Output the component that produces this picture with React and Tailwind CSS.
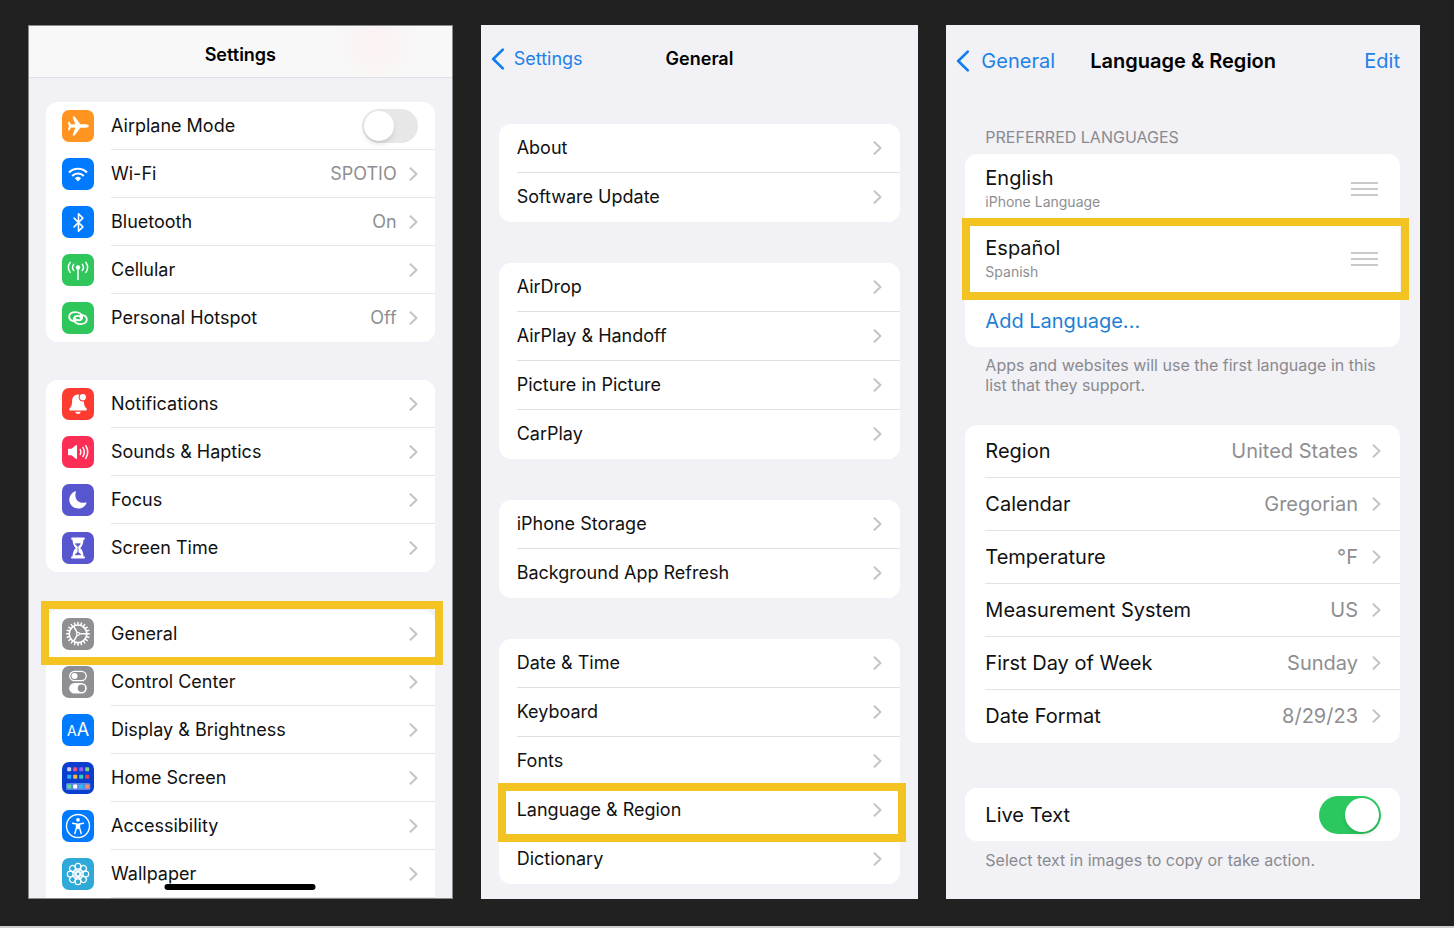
import React, { useState } from 'react';
import { Bluetooth } from 'lucide-react';
import { clsx } from 'clsx';

const Glyph = ({ children, ...rest }) => (
    <svg viewBox="0 0 32 32" className="size-8" fill="none" stroke="#fff" strokeLinecap="round" strokeLinejoin="round" aria-hidden="true" {...rest}>
        {children}
    </svg>
);

const PlaneGlyph = () => (
    <Glyph stroke="none" fill="#fff">
        <path d="M26.8 16c0-1-1.400-1.700-3.200-1.700h-5.200L13 6.900c-.3-.4-.6-.5-1-.5h-.8c-.4 0-.6.3-.5.7l2.500 7.200-4 .3-1.700-2.500c-.2-.3-.4-.4-.7-.4h-.4c-.3 0-.5.2-.4.6L6.900 16 6 19.700c-.1.400.1.600.4.600h.4c.3 0 .5-.1.7-.4l1.700-2.500 4 .3-2.500 7.200c-.1.400.1.700.5.700h.8c.4 0 .7-.1 1-.5l5.400-7.400h5.200c1.800 0 3.200-.7 3.200-1.700z" />
    </Glyph>
);

const WifiGlyph = () => (
    <Glyph strokeWidth="2.1" strokeLinecap="butt">
        <path d="M7 14.400a12.800 12.800 0 0 1 18 0" />
        <path d="M10.200 17.900a8.300 8.300 0 0 1 11.600 0" />
        <path d="M12.900 20.300a4.500 4.500 0 0 1 6.200 0L16 23.400z" fill="#fff" stroke="none" />
    </Glyph>
);

const CellularGlyph = () => (
    <Glyph strokeWidth="1.500">
        <circle cx="16" cy="13.400" r="2.200" fill="#fff" stroke="none" />
        <path d="M16 14v11.500" />
        <path d="M11.700 16.400a4.800 4.800 0 0 1 0-6M20.300 16.400a4.800 4.800 0 0 0 0-6" />
        <path d="M8.200 18.400a8.200 8.200 0 0 1 0-10M23.800 18.400a8.200 8.200 0 0 0 0-10" />
    </Glyph>
);

const HotspotGlyph = () => (
    <Glyph strokeWidth="1.900">
        <path d="M13.200 19.300c-3.600-.2-6-2-6-4.600 0-2.800 2.600-4.600 6.200-4.600s6.800 2 6.800 4.900c0 2-1.700 3.300-4 3.300-1.700 0-2.900-.8-3.200-2" />
        <path d="M18.800 12.900c3.600.2 6 2 6 4.600 0 2.800-2.600 4.600-6.200 4.600s-6.800-2-6.800-4.900c0-2 1.700-3.300 4-3.300 1.700 0 2.900.8 3.200 2" />
    </Glyph>
);

const BellGlyph = () => (
    <Glyph stroke="none" fill="#fff">
        <path d="M16 6.500c-4 0-5.900 3-5.900 6.600 0 4.300-1 5.700-2.600 7.500-.8 1-.3 2 .8 2h15.400c1.100 0 1.600-1 .8-2-1.600-1.800-2.600-3.200-2.600-7.500C21.900 9.500 20 6.500 16 6.500z" />
        <path d="M13.300 23.800h5.400c-.3 1.400-1.300 2.200-2.700 2.200s-2.400-.8-2.700-2.200z" />
        <circle cx="20.800" cy="9.200" r="4.200" fill="#fe3b30" />
        <circle cx="20.800" cy="9.200" r="3.100" />
    </Glyph>
);

const SpeakerGlyph = () => (
    <Glyph strokeWidth="1.500">
        <path d="M6 13.700c0-.6.4-1 1-1h2.500l4.300-3.500c.7-.5 1.200-.2 1.200.6v12.400c0 .8-.5 1.100-1.200.6l-4.300-3.500H7c-.6 0-1-.4-1-1z" fill="#fff" stroke="none" />
        <path d="M18.300 13.500a5.400 5.400 0 0 1 0 5M21 11.500a9.200 9.200 0 0 1 0 9M23.800 9.600a12.600 12.600 0 0 1 0 12.800" />
    </Glyph>
);

const MoonGlyph = () => (
    <Glyph stroke="none">
        <path d="M13.200 7.300c.5-.2.900.2.700.7-2.300 6.800 2.800 12.300 9.800 10.400.6-.2 1 .3.700.8a8.900 8.900 0 1 1-11.200-11.900z" fill="#fff" />
    </Glyph>
);

const HourglassGlyph = () => (
    <Glyph strokeWidth="1.800">
        <path d="M10.300 6.600h11.400M10.300 25.400h11.400" strokeWidth="2.400" />
        <path d="M11.400 7.500c0 4.600 1 6 3.300 8.500-2.300 2.500-3.300 3.900-3.300 8.500h9.200c0-4.600-1-6-3.300-8.500 2.300-2.500 3.300-3.900 3.300-8.500z" fill="#fff" />
        <path d="M13.700 11.800h4.600L16 14.600zM16 16v4.200l-2.900 2.500h5.800L16 20.200" fill="#5856ce" stroke="#5856ce" strokeWidth="0.800" />
    </Glyph>
);

const TEETH = Array.from({ length: 20 }, (_, i) => i * 18);

const GearGlyph = () => (
    <Glyph strokeWidth="1.700" strokeLinecap="butt">
        <circle cx="16" cy="15.800" r="8.800" />
        {TEETH.map((angle) => (
            <path key={angle} d="M16 7V3.900" transform={`rotate(${angle} 16 15.800)`} strokeWidth="1.500" />
        ))}
        <circle cx="16" cy="15.800" r="1.500" strokeWidth="1.200" />
        <path d="M17.500 15.800h7.100M15.200 14.500l-3.500-6.200M15.200 17.100l-3.500 6.200" strokeWidth="1.500" />
    </Glyph>
);

const SwitchesGlyph = () => (
    <Glyph strokeWidth="1.300">
        <rect x="7.800" y="5.300" width="16.400" height="9.400" rx="4.700" />
        <circle cx="12.500" cy="10" r="3" fill="#fff" stroke="none" />
        <rect x="7.200" y="17" width="17.600" height="10.600" rx="5.300" fill="#fff" stroke="none" />
        <circle cx="19.500" cy="22.300" r="3.700" fill="#8e8e93" stroke="none" />
    </Glyph>
);

const APP_DOTS = [
    ['#cfd3ea', '#f0508a', '#9b5cf5', '#86cf7a'],
    ['#28b4f0', '#f5b63c', '#38cdb0', '#e0405a'],
    ['#58e08c', '#ffffff', '#30b8f0', '#f09068'],
];

const HomeScreenGlyph = () => (
    <Glyph stroke="none">
        <rect x="4" y="21" width="24.400" height="7" rx="1.500" fill="#5b84ea" />
        {APP_DOTS.map((row, r) =>
            row.map((fill, c) => (
                <rect key={`${r}-${c}`} x={5.2 + c * 6} y={[5.2, 12.8, 22.5][r]} width="4" height="4" rx="0.800" fill={fill} />
            ))
        )}
    </Glyph>
);

const AccessibilityGlyph = () => (
    <Glyph strokeWidth="1.400">
        <circle cx="16" cy="16" r="11.500" />
        <circle cx="16" cy="9.800" r="1.900" fill="#fff" stroke="none" />
        <path d="M10.600 13.200l3.900.8v3.800l-1.700 5.700M21.400 13.200l-3.900.8v3.800l1.700 5.700" />
        <path d="M14.300 13.600h3.400v4.900L16 19.200l-1.700-.7z" fill="#fff" stroke="none" />
    </Glyph>
);

const PETALS = Array.from({ length: 8 }, (_, i) => i * 45);

const FlowerGlyph = () => (
    <Glyph strokeWidth="1.200">
        {PETALS.map((angle) => (
            <g key={angle} transform={`rotate(${angle} 16 16)`}>
                <circle cx="16" cy="8.200" r="2.900" />
                <path d="M14.300 10.700L16 14.200l1.700-3.500" />
            </g>
        ))}
        <circle cx="16" cy="16" r="2" />
    </Glyph>
);

const Chevron = () => (
    <svg viewBox="0 0 9 14" className="h-[14px] w-[9px] shrink-0" fill="none" stroke="#c4c4c7" strokeWidth="2" strokeLinecap="round" strokeLinejoin="round" aria-hidden="true">
        <path d="M1.500 1.200L7.500 7l-6 5.800" />
    </svg>
);

const BackChevron = () => (
    <svg viewBox="0 0 14 22" className="h-[22px] w-[14px] shrink-0" fill="none" stroke="#0f7cf0" strokeWidth="2.600" strokeLinecap="round" strokeLinejoin="round" aria-hidden="true">
        <path d="M11.800 1.600L2.200 11l9.600 9.400" />
    </svg>
);

const DEVICE_GROUPS = [
    [
        { label: 'Airplane Mode', color: 'bg-[#ff9520]', icon: <PlaneGlyph />, toggle: true },
        { label: 'Wi-Fi', color: 'bg-[#007aff]', icon: <WifiGlyph />, value: 'SPOTIO' },
        { label: 'Bluetooth', color: 'bg-[#007aff]', icon: <Bluetooth size={21} color="#fff" strokeWidth={1.8} />, value: 'On' },
        { label: 'Cellular', color: 'bg-[#2fc65b]', icon: <CellularGlyph /> },
        { label: 'Personal Hotspot', color: 'bg-[#2fc65b]', icon: <HotspotGlyph />, value: 'Off' },
    ],
    [
        { label: 'Notifications', color: 'bg-[#fe3b30]', icon: <BellGlyph /> },
        { label: 'Sounds & Haptics', color: 'bg-[#fe2d55]', icon: <SpeakerGlyph /> },
        { label: 'Focus', color: 'bg-[#5856ce]', icon: <MoonGlyph /> },
        { label: 'Screen Time', color: 'bg-[#5856ce]', icon: <HourglassGlyph /> },
    ],
    [
        { label: 'General', color: 'bg-[#8e8e93]', icon: <GearGlyph />, highlight: '-top-[9px] -bottom-[7px] -left-[5px] -right-2' },
        { label: 'Control Center', color: 'bg-[#8e8e93]', icon: <SwitchesGlyph /> },
        {
            label: 'Display & Brightness',
            color: 'bg-[#007aff]',
            icon: (
                <span className="flex items-baseline leading-none text-white" aria-hidden="true">
                    <span className="text-sm">A</span>
                    <span className="text-lg">A</span>
                </span>
            ),
        },
        { label: 'Home Screen', color: 'bg-[#0a3ecf]', icon: <HomeScreenGlyph /> },
        { label: 'Accessibility', color: 'bg-[#007aff]', icon: <AccessibilityGlyph /> },
        { label: 'Wallpaper', color: 'bg-[#2fa9d8]', icon: <FlowerGlyph /> },
    ],
];

const GENERAL_GROUPS = [
    [{ label: 'About' }, { label: 'Software Update' }],
    [{ label: 'AirDrop' }, { label: 'AirPlay & Handoff' }, { label: 'Picture in Picture' }, { label: 'CarPlay' }],
    [{ label: 'iPhone Storage' }, { label: 'Background App Refresh' }],
    [
        { label: 'Date & Time' },
        { label: 'Keyboard' },
        { label: 'Fonts' },
        { label: 'Language & Region', highlight: '-top-[3px] -bottom-[7px] -left-px -right-[6px]' },
        { label: 'Dictionary' },
    ],
];

const LANGUAGES = [
    { name: 'English', note: 'iPhone Language' },
    { name: 'Español', note: 'Spanish', highlight: '-top-[6px] -bottom-[6px] -left-[3px] -right-[9px]' },
];

const REGION_ROWS = [
    { label: 'Region', value: 'United States' },
    { label: 'Calendar', value: 'Gregorian' },
    { label: 'Temperature', value: '°F' },
    { label: 'Measurement System', value: 'US' },
    { label: 'First Day of Week', value: 'Sunday' },
    { label: 'Date Format', value: '8/29/23' },
];

const Highlight = ({ className }) => (
    <span className={clsx('pointer-events-none absolute z-10 border-8 border-[#f3c322]', className)} />
);

const Card = ({ children, className }) => <ul className={clsx('rounded-xl bg-white', className)}>{children}</ul>;

const DeviceRow = ({ item, last }) => {
    const [on, setOn] = useState(false);
    const Tag = item.toggle ? 'label' : 'a';

    return (
        <li className="relative">
            <Tag href={item.toggle ? undefined : '#'} className="flex h-12 items-center gap-[17px] pl-4">
                <span className={clsx('flex size-8 shrink-0 items-center justify-center overflow-hidden rounded-[7px]', item.color)}>
                    {item.icon}
                </span>
                <span className={clsx('flex h-full flex-1 items-center border-b pr-[17px]', last ? 'border-transparent' : 'border-[#e6e6e8]')}>
                    <span className="flex-1">{item.label}</span>
                    {item.value && <span className="mr-3 text-[#8e8e92]">{item.value}</span>}
                    {item.toggle ? (
                        <input
                            type="checkbox"
                            checked={on}
                            onChange={(e) => setOn(e.target.checked)}
                            className="h-[34px] w-14 appearance-none rounded-full bg-[#e7e7e8] p-[2px] before:block before:size-[30px] before:rounded-full before:bg-white before:shadow-md checked:bg-[#2bc860] checked:before:ml-[22px]"
                        />
                    ) : (
                        <Chevron />
                    )}
                </span>
            </Tag>
            {item.highlight && <Highlight className={item.highlight} />}
        </li>
    );
};

const SettingsScreen = () => (
    <section className="relative flex flex-col overflow-hidden border border-[#8a8a8c] bg-[#f1f1f6] text-lg text-[#111]">
        <header className="flex h-[52px] items-center justify-center border-b border-[#dddde3] bg-[#f8f8f8] bg-[radial-gradient(circle_at_82%_40%,#fcf1f1_0,#f8f8f8_12%)] pt-[6px]">
            <h1 className="font-semibold text-black">Settings</h1>
        </header>
        <div className="flex flex-col gap-[38px] px-[17px] pt-6">
            {DEVICE_GROUPS.map((group, g) => {
                // the last card runs on below the fold
                const cut = g === DEVICE_GROUPS.length - 1;
                return (
                    <Card key={group[0].label} className={cut && 'rounded-b-none'}>
                        {group.map((item, i) => (
                            <DeviceRow key={item.label} item={item} last={!cut && i === group.length - 1} />
                        ))}
                    </Card>
                );
            })}
        </div>
        <div className="absolute bottom-2 left-1/2 h-[6px] w-[151px] -translate-x-1/2 rounded-full bg-black" />
    </section>
);

const GeneralScreen = () => (
    <section className="flex flex-col bg-[#f1f1f6] text-lg text-[#111]">
        <header className="grid h-[68px] grid-cols-[1fr_auto_1fr] items-center px-[10px]">
            <a href="#" className="flex items-center gap-[9px] text-[#1f82e8]">
                <BackChevron />
                Settings
            </a>
            <h1 className="font-semibold text-black">General</h1>
        </header>
        <div className="flex flex-col gap-[41px] px-[18px] pt-[31px]">
            {GENERAL_GROUPS.map((group) => (
                <Card key={group[0].label}>
                    {group.map((item, i) => (
                        <li key={item.label} className="relative pl-[18px]">
                            <a href="#" className={clsx('flex h-[49px] items-center justify-between border-b pr-[18px]', i < group.length - 1 ? 'border-[#e0e0e3]' : 'border-transparent')}>
                                {item.label}
                                <Chevron />
                            </a>
                            {item.highlight && <Highlight className={item.highlight} />}
                        </li>
                    ))}
                </Card>
            ))}
        </div>
    </section>
);

const LanguageScreen = () => {
    const [liveText, setLiveText] = useState(true);

    return (
        <section className="flex flex-col bg-[#f1f1f6] text-xl text-[#111]">
            <header className="grid h-[71px] grid-cols-[1fr_auto_1fr] items-center px-[10px]">
                <a href="#" className="flex items-center gap-[11px] text-[#1f82e8]">
                    <BackChevron />
                    General
                </a>
                <h1 className="font-semibold text-black">Language &amp; Region</h1>
                <button type="button" className="mr-[10px] justify-self-end text-[#1f82e8]">Edit</button>
            </header>

            <div className="pt-[31px] pr-5 pl-[19px]">
                <h2 className="mb-[7px] pl-5 text-base leading-5 text-[#8a8a8e]">PREFERRED LANGUAGES</h2>
                <Card>
                    {LANGUAGES.map((lang) => (
                        <li key={lang.name} className="relative pl-5">
                            <div className="flex h-[70px] items-center justify-between border-b border-[#e3e3e6] pr-[22px]">
                                <div className="pb-[2px]">
                                    <p className="leading-7">{lang.name}</p>
                                    <p className="text-sm leading-5 text-[#8e8e92]">{lang.note}</p>
                                </div>
                                <button type="button" aria-label={`Reorder ${lang.name}`} className="flex w-[27px] flex-col gap-1">
                                    <span className="h-[2px] bg-[#c8c8ca]" />
                                    <span className="h-[2px] bg-[#c8c8ca]" />
                                    <span className="h-[2px] bg-[#c8c8ca]" />
                                </button>
                            </div>
                            {lang.highlight && <Highlight className={lang.highlight} />}
                        </li>
                    ))}
                    <li className="pl-5">
                        <button type="button" className="flex h-[53px] w-full items-center text-[#1f7fd4]">Add Language...</button>
                    </li>
                </Card>
                <p className="mt-2 mb-[30px] px-5 text-base leading-5 text-[#8a8a8e]">
                    Apps and websites will use the first language in this list that they support.
                </p>

                <Card>
                    {REGION_ROWS.map((row, i) => (
                        <li key={row.label} className="pl-5">
                            <a href="#" className={clsx('flex h-[53px] items-center border-b pr-[19px]', i < REGION_ROWS.length - 1 ? 'border-[#e3e3e6]' : 'border-transparent')}>
                                <span className="flex-1">{row.label}</span>
                                <span className="mr-[14px] text-[#8e8e92]">{row.value}</span>
                                <Chevron />
                            </a>
                        </li>
                    ))}
                </Card>

                <label className="mt-[45px] flex h-[53px] items-center justify-between rounded-xl bg-white pr-[19px] pl-5">
                    Live Text
                    <input
                        type="checkbox"
                        checked={liveText}
                        onChange={(e) => setLiveText(e.target.checked)}
                        className="h-[38px] w-[62px] appearance-none rounded-full bg-[#e7e7e8] p-[2px] before:block before:size-[34px] before:rounded-full before:bg-white before:shadow-md checked:bg-[#2bc860] checked:before:ml-6"
                    />
                </label>
                <p className="mt-[9px] px-5 text-base leading-5 text-[#8a8a8e]">Select text in images to copy or take action.</p>
            </div>
        </section>
    );
};

const App = () => (
    <main className="grid min-h-screen grid-cols-[425fr_438fr_474fr] gap-x-7 border-b-2 border-[#cfcdcf] bg-[#212121] pt-[25px] pr-[34px] pb-[27px] pl-7 font-['Inter','Liberation_Sans',sans-serif]">
        <SettingsScreen />
        <GeneralScreen />
        <LanguageScreen />
    </main>
);

export default App;
